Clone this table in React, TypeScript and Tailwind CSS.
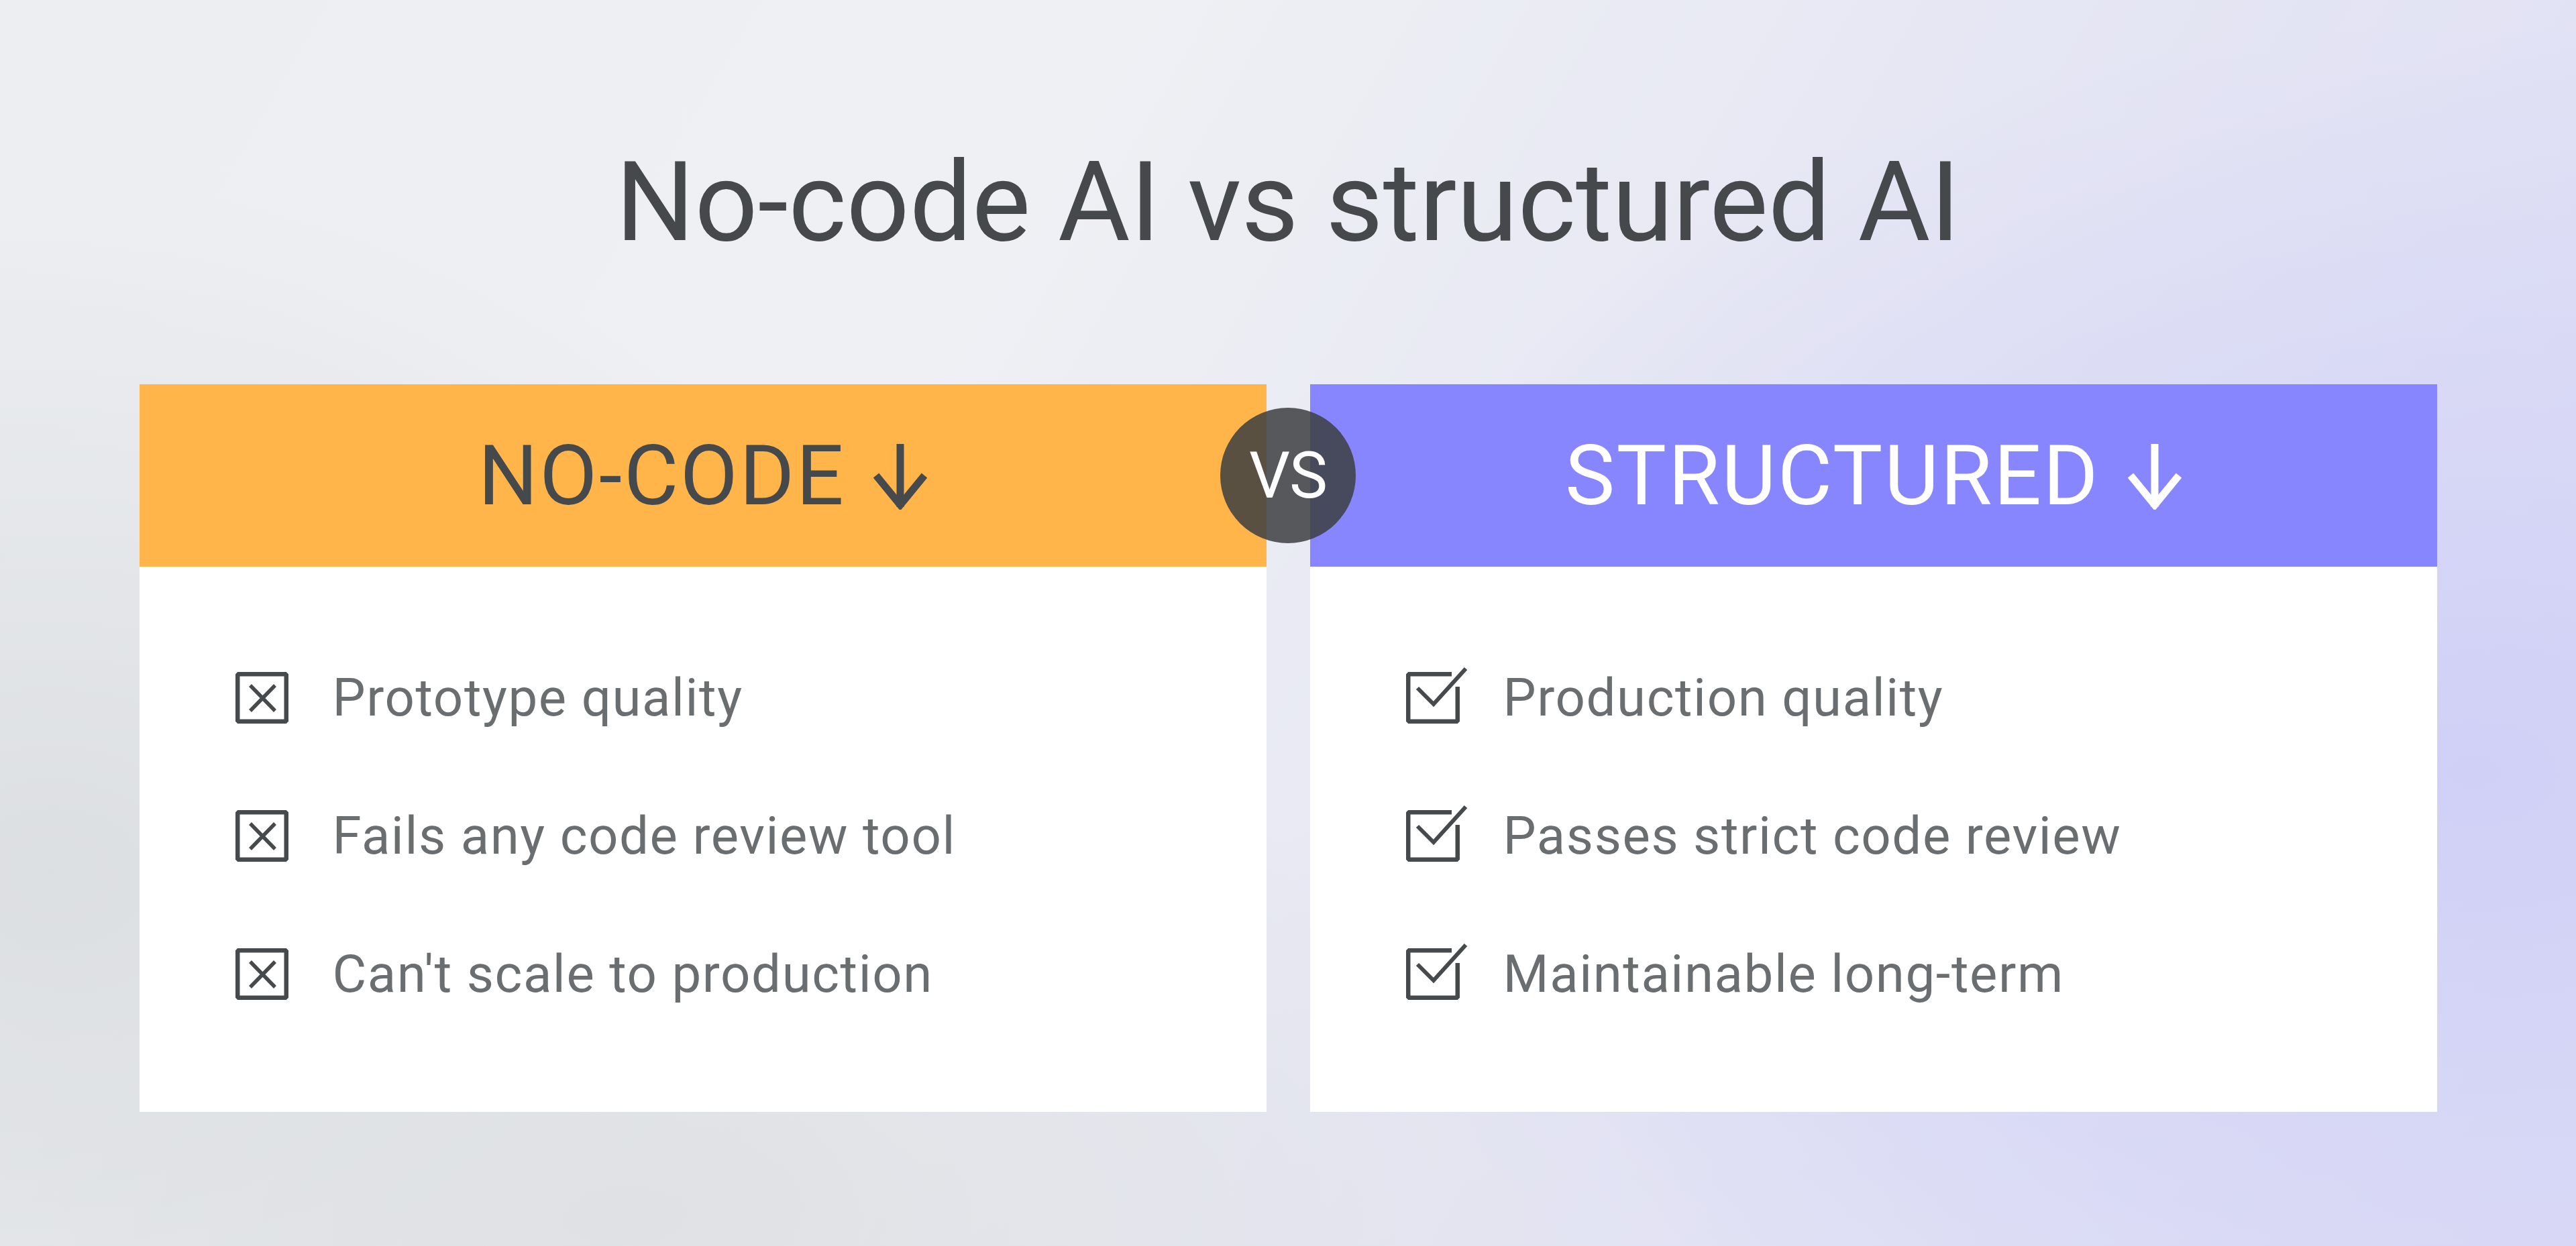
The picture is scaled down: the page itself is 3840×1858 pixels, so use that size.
import React from 'react';

const noCode = ['Prototype quality', 'Fails any code review tool', "Can't scale to production"];
const structured = ['Production quality', 'Passes strict code review', 'Maintainable long-term'];

function CrossBox() {
  return (
    <svg width="79" height="77" viewBox="0 0 79 77" fill="none" stroke="#464a4c" className="block">
      <path d="M3.25 3.25H75.75V73.75H3.25Z" strokeWidth="6.5" strokeLinejoin="bevel" />
      <path d="M22 20L59 58M59 20L22 58" strokeWidth="5.5" />
    </svg>
  );
}

function CheckBox() {
  return (
    <svg width="92" height="84" viewBox="0 0 92 84" fill="none" stroke="#464a4c" className="block -mt-[7px]">
      <path d="M68 10.25H3.25V80.75H76.75V29" strokeWidth="6.5" strokeLinejoin="bevel" />
      <path d="M17 31L41 55L89 2" strokeWidth="6" />
    </svg>
  );
}

function DownArrow({ color }: { color: string }) {
  return (
    <svg width="80" height="98" viewBox="0 0 80 98" fill="none" stroke={color} strokeWidth="11" className="block">
      <path d="M40 0V94" />
      <path d="M4 47L40 91L76 47" />
    </svg>
  );
}

function Card({ title, items, header, text, good }: { title: string; items: string[]; header: string; text: string; good?: boolean }) {
  return (
    <div className="w-[1680px] bg-white flex flex-col">
      <div className={`h-[272px] flex items-center justify-center ${header}`}>
        <span className={`text-[125px] leading-none tracking-[0.02em] ${text}`}>{title}</span>
        <span className="ml-[42px] mt-[4px]">
          <DownArrow color={good ? '#ffffff' : '#464a4c'} />
        </span>
      </div>
      <div className="h-[813px] pt-[157px] pl-[143px] flex flex-col gap-[129px]">
        {items.map((item) => (
          <div key={item} className="h-[77px] flex items-center">
            <div className="w-[145px] shrink-0">{good ? <CheckBox /> : <CrossBox />}</div>
            <span className="text-[78px] leading-none tracking-[0.02em] text-[#6b6e70]">{item}</span>
          </div>
        ))}
      </div>
    </div>
  );
}

export default function App() {
  return (
    <div
      className="w-full h-[1858px] overflow-hidden font-['Roboto','Liberation_Sans',sans-serif] bg-[radial-gradient(ellipse_45%_60%_at_96%_62%,#d0d0f7_0%,rgba(208,208,247,0)_100%),radial-gradient(ellipse_35%_55%_at_2%_70%,#dcdfe2_0%,rgba(220,223,226,0)_100%),radial-gradient(ellipse_40%_40%_at_25%_98%,#dfe1e4_0%,rgba(223,225,228,0)_100%),linear-gradient(120deg,#eceef1_0%,#eef0f4_35%,#e6e7f3_60%,#dcdcf5_100%)]"
    >
      <h1 className="pt-[219px] text-center text-[165px] leading-none font-normal text-[#45494c]">
        No-code AI vs structured AI
      </h1>

      <div className="relative mt-[189px] flex justify-center gap-[65px]">
        <Card title="NO-CODE" items={noCode} header="bg-[#ffb54a]" text="text-[#45494c]" />
        <Card title="STRUCTURED" items={structured} header="bg-[#8886fe]" text="text-white" good />

        {/* vs badge sitting over the gap between the two headers */}
        <div className="absolute left-1/2 top-[35px] -translate-x-1/2 w-[202px] h-[202px] rounded-full bg-[#3c3e41]/85 flex items-center justify-center">
          <span className="text-[96px] leading-none text-white tracking-[-0.01em]">VS</span>
        </div>
      </div>
    </div>
  );
}
